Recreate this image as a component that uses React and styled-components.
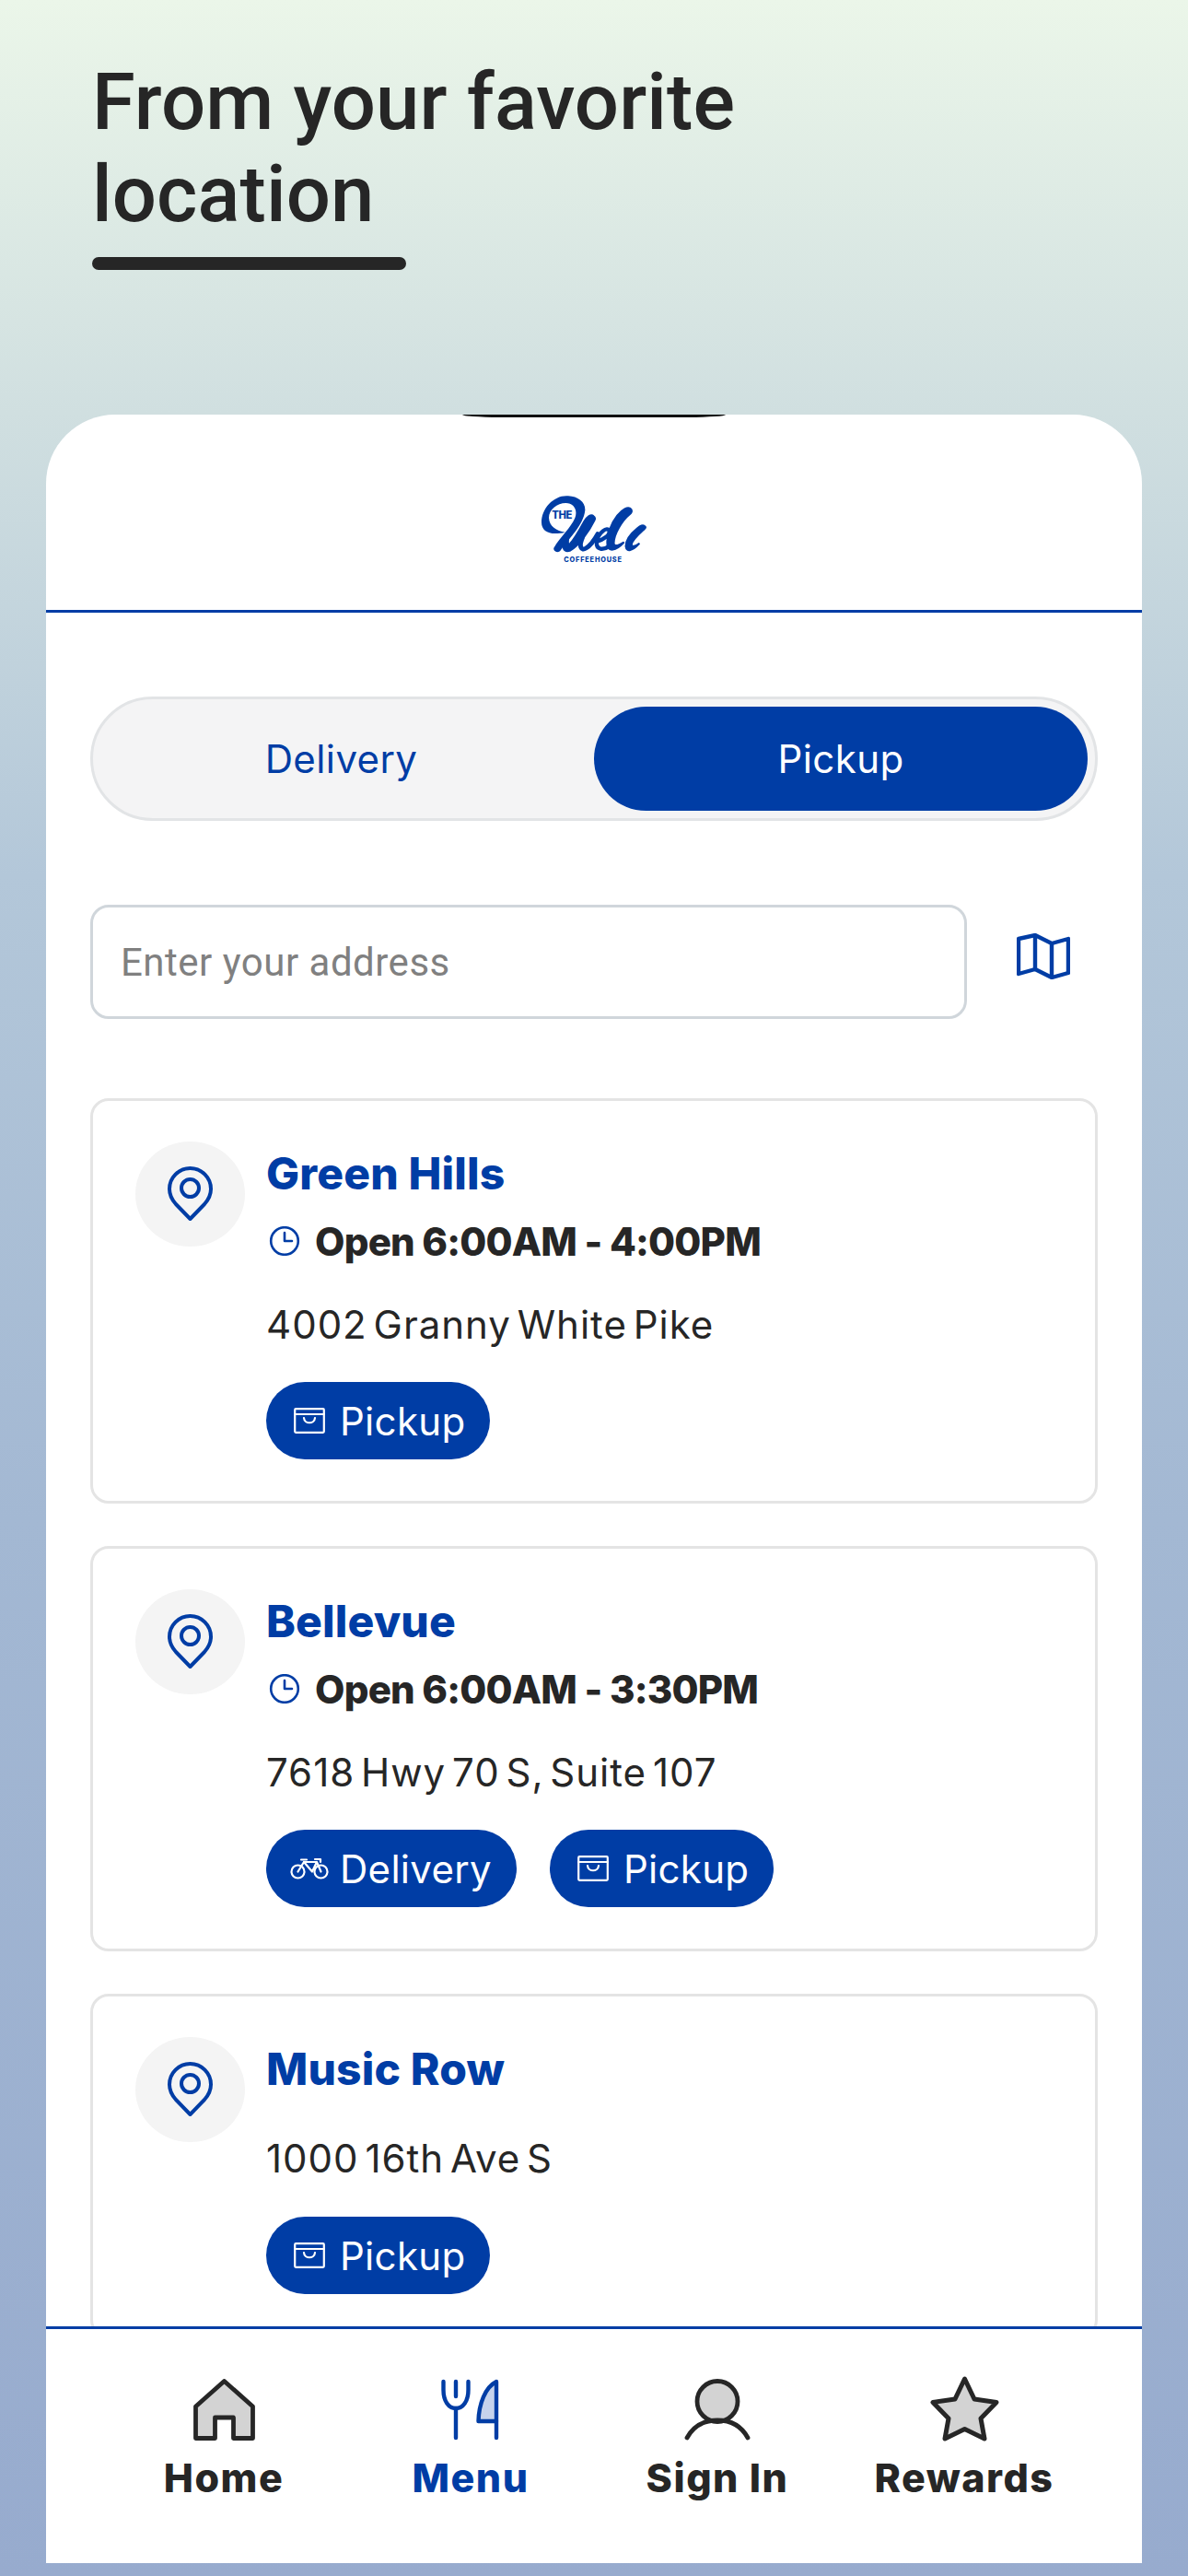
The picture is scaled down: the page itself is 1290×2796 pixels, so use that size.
import React from 'react'
import styled, { createGlobalStyle } from "styled-components"

const BLUE = '#003da5'
const INK = '#262626'

const GlobalStyle = createGlobalStyle`
  html, body {
    margin: 0;
    padding: 0;
  }
  * {
    box-sizing: border-box;
  }
`

const Logo = () => (
    <svg width="114" height="74" viewBox="263 325 342 222">
        <path fill={BLUE} d="M350 326 C305 322 263 365 263 412 C263 442 292 456 340 444 C312 440 288 425 287 397 C287 370 314 349 342 349 C368 349 382 372 372 398 C358 430 326 458 303 495 C300 508 318 514 326 502 C354 462 400 420 405 372 C406 345 382 328 350 326 Z" />
        <g fill={BLUE} stroke={BLUE} strokeWidth="7" strokeLinejoin="round">
            <path d="M432 392 C424 384 410 396 402 410 C390 432 372 465 356 482 C348 490 346 470 354 452 L338 464 C328 490 335 510 355 504 C385 490 420 435 435 405 C438 400 437 396 432 392 Z" />
            <path d="M555 370 C545 358 525 372 510 390 C490 415 475 455 478 485 C480 508 505 505 530 478 C520 485 500 495 498 480 C498 450 525 405 550 385 C556 380 558 375 555 370 Z" />
            <path d="M600 426 C594 418 585 424 575 432 C555 448 538 470 538 490 C540 510 560 504 580 482 C570 490 556 494 556 484 C558 468 585 445 597 434 C602 430 602 428 600 426 Z" />
        </g>
        <g fill="none" stroke={BLUE} strokeLinecap="round" strokeLinejoin="round">
            <path strokeWidth="15" d="M396 462 C384 490 392 506 408 496 C424 486 436 468 446 450" />
            <path strokeWidth="13" d="M444 474 C464 468 486 454 484 440 C478 424 448 444 443 476 C440 502 464 504 486 488" />
        </g>
        <text x="297" y="400" fill={BLUE} fontFamily="Inter, sans-serif" fontWeight="800" fontSize="34" textLength="66">THE</text>
        <text x="336" y="541" fill={BLUE} fontFamily="Inter, sans-serif" fontWeight="800" fontSize="22" textLength="188">COFFEEHOUSE</text>
    </svg>
)

const PinIcon = () => (
    <svg width="49" height="60" viewBox="0 0 49 60" fill="none" stroke={BLUE} strokeWidth="4" strokeLinejoin="round">
        <path d="M24.5 57 L9 41 C4.5 36 2 30 2 24.5 A22.5 22.5 0 0 1 47 24.5 C47 30 44.5 36 40 41 Z" />
        <circle cx="24.5" cy="23.5" r="9.5" />
    </svg>
)

const ClockIcon = () => (
    <svg width="34" height="32" viewBox="0 0 34 32" fill="none" stroke={BLUE} strokeWidth="2.6" strokeLinecap="round" strokeLinejoin="round">
        <circle cx="17" cy="16" r="14.8" />
        <path d="M17 7 V16 H25" />
    </svg>
)

const MapIcon = () => (
    <svg width="58" height="50" viewBox="0 0 58 50" fill="none" stroke={BLUE} strokeWidth="4.4" strokeLinejoin="round">
        <path d="M2 6 L20 2 L38 11 L56 6 V43 L38 48 L20 39 L2 44 Z" />
        <path d="M20 2 V39 M38 11 V48" />
    </svg>
)

const BagSvg = styled.svg`
    margin: 0 4px;
`

const BagIcon = () => (
    <BagSvg width="34" height="28" viewBox="0 0 34 28" fill="none" stroke="#fff" strokeWidth="2.2" strokeLinecap="round" strokeLinejoin="round">
        <rect x="1.2" y="1.2" width="31.6" height="25.6" rx="1" />
        <path d="M1.2 7 H32.8" />
        <path d="M11 11 C11.5 18 22.5 18 23 11" />
    </BagSvg>
)

const BikeIcon = () => (
    <svg width="42" height="24" viewBox="0 0 42 24" fill="none" stroke="#fff" strokeWidth="2.2" strokeLinecap="round" strokeLinejoin="round">
        <circle cx="8.5" cy="15.5" r="7" />
        <circle cx="33.5" cy="15.5" r="7" />
        <path d="M8.5 15.5 L15 5 L24 15.5 L29 5 L33.5 15.5" />
        <path d="M12 2.5 H18 M15 5 H28 M27 2 H33 V5" />
    </svg>
)

const HomeIcon = () => (
    <svg width="67" height="67" viewBox="0 0 67 67" fill="#d3d3d3" stroke={INK} strokeWidth="4.8" strokeLinejoin="round">
        <path d="M33.5 2.5 L2.5 30 V64.5 H23.5 V42 H43.5 V64.5 H64.5 V30 Z" />
    </svg>
)

const MenuIcon = () => (
    <svg width="66" height="67" viewBox="0 0 66 67" fill="none" stroke={BLUE} strokeWidth="4.4" strokeLinecap="round" strokeLinejoin="round">
        <path d="M3.5 3 V12 C3.5 24 9 32 17 32 C25 32 30.5 24 30.5 12 V3" />
        <path d="M17 3 V19 M17 32 V64" />
        <path fill="#c6d3ec" d="M61 3 C49 9 42 27 41.5 46 H61 Z" />
        <path d="M61 46 V64" />
    </svg>
)

const PersonIcon = () => (
    <svg width="72" height="67" viewBox="0 0 72 67" fill="none" stroke={INK} strokeWidth="4.8" strokeLinecap="round">
        <circle cx="36" cy="24.5" r="22" fill="#d3d3d3" />
        <path d="M3 64 C10 51 22 45 36 45 C50 45 62 51 69 64" />
    </svg>
)

const StarIcon = () => (
    <svg width="77" height="72" viewBox="0 0 77 72" fill="#d3d3d3" stroke={INK} strokeWidth="5" strokeLinejoin="round">
        <path d="M38.5 3 L49 25 L73 28.5 L56 46 L60 68 L38.5 57.5 L17 68 L21 46 L4 28.5 L28 25 Z" />
    </svg>
)

const locations = [
    { name: 'Green Hills', hours: 'Open 6:00AM - 4:00PM', address: '4002 Granny White Pike', services: ['Pickup'] },
    { name: 'Bellevue', hours: 'Open 6:00AM - 3:30PM', address: '7618 Hwy 70 S, Suite 107', services: ['Delivery', 'Pickup'] },
    { name: 'Music Row', address: '1000 16th Ave S', services: ['Pickup'] },
]

const navItems = [
    { label: 'Home', icon: <HomeIcon /> },
    { label: 'Menu', icon: <MenuIcon />, active: true },
    { label: 'Sign In', icon: <PersonIcon /> },
    { label: 'Rewards', icon: <StarIcon /> },
]

function App() {
    return (
        <Page>
            <GlobalStyle />
            <Hero>
                <Title>From your favorite<br />location</Title>
                <TitleBar />
            </Hero>

            <Panel>
                <Notch />
                <Header>
                    <Logo />
                </Header>

                <Content>
                    <Toggle>
                        <ToggleOption>Delivery</ToggleOption>
                        <ToggleOption $active>Pickup</ToggleOption>
                    </Toggle>

                    <SearchRow>
                        <AddressInput type="text" placeholder="Enter your address" />
                        <MapButton><MapIcon /></MapButton>
                    </SearchRow>

                    <CardList>
                        {locations.map(loc => (
                            <Card key={loc.name}>
                                <PinCircle><PinIcon /></PinCircle>
                                <CardBody>
                                    <Name>{loc.name}</Name>
                                    {loc.hours && (
                                        <Hours>
                                            <ClockIcon />
                                            {loc.hours}
                                        </Hours>
                                    )}
                                    <Address>{loc.address}</Address>
                                    <Services>
                                        {loc.services.map(s => (
                                            <ServicePill key={s}>
                                                {s === 'Delivery' ? <BikeIcon /> : <BagIcon />}
                                                {s}
                                            </ServicePill>
                                        ))}
                                    </Services>
                                </CardBody>
                            </Card>
                        ))}
                    </CardList>
                </Content>

                <Nav>
                    {navItems.map(item => (
                        <NavItem key={item.label} $active={item.active}>
                            <NavIcon>{item.icon}</NavIcon>
                            {item.label}
                        </NavItem>
                    ))}
                </Nav>
            </Panel>
        </Page>
    )
}

const Page = styled.div`
    width: 1290px;
    height: 2796px;
    overflow: hidden;
    display: flex;
    flex-direction: column;
    padding-bottom: 14px;
    background: linear-gradient(180deg, #ebf6e9 0%, #d0dfe0 16%, #b3c7d9 34%, #a3b8d3 59%, #97abce 100%);
    font-family: Inter, "Liberation Sans", sans-serif;
    color: ${INK};
`
const Hero = styled.div`
    height: 450px;
    flex-shrink: 0;
    padding: 61px 0 0 100px;
`
const Title = styled.h1`
    margin: 0;
    font-family: Roboto, sans-serif;
    font-weight: 500;
    font-size: 85px;
    line-height: 100px;
    letter-spacing: 0.1px;
    color: ${INK};
`
const TitleBar = styled.div`
    width: 341px;
    height: 14px;
    margin-top: 18px;
    border-radius: 7px;
    background-color: ${INK};
`
const Panel = styled.div`
    position: relative;
    flex: 1;
    min-height: 0;
    margin: 0 50px;
    display: flex;
    flex-direction: column;
    overflow: hidden;
    border-radius: 75px 75px 0 0;
    background-color: #fff;
`
const Notch = styled.div`
    position: absolute;
    top: 0;
    left: 452px;
    width: 286px;
    height: 3px;
    border-radius: 0 0 40px 40px / 0 0 3px 3px;
    background-color: #111;
`
const Header = styled.header`
    height: 215px;
    flex-shrink: 0;
    padding-top: 37px;
    display: flex;
    align-items: center;
    justify-content: center;
    border-bottom: 3px solid ${BLUE};
`
const Content = styled.div`
    flex: 1;
    min-height: 0;
    overflow: hidden;
    padding: 91px 48px 0;
`
const Toggle = styled.div`
    height: 135px;
    padding: 8px;
    display: grid;
    grid-template-columns: 1fr 536px;
    column-gap: 13px;
    border: 3px solid #e2e4e6;
    border-radius: 68px;
    background-color: #f4f4f5;
`
const ToggleOption = styled.div`
    display: flex;
    align-items: center;
    justify-content: center;
    border-radius: 57px;
    font-size: 42px;
    letter-spacing: 0.4px;
    color: ${p => p.$active ? '#fff' : BLUE};
    background-color: ${p => p.$active ? BLUE : 'transparent'};
`
const SearchRow = styled.div`
    display: flex;
    margin-top: 91px;
`
const AddressInput = styled.input`
    width: 953px;
    height: 124px;
    padding: 0 30px;
    border: 3px solid #d0d6db;
    border-radius: 20px;
    outline: none;
    background-color: #fff;
    font-family: Roboto, sans-serif;
    font-size: 42px;
    letter-spacing: 0.5px;

    &::placeholder {
        color: #808080;
        opacity: 1;
    }
`
const MapButton = styled.div`
    flex: 1;
    padding: 0 30px 12px 54px;
    display: flex;
    align-items: center;
    justify-content: center;
`
const CardList = styled.div`
    display: flex;
    flex-direction: column;
    gap: 46px;
    margin-top: 86px;
`
const Card = styled.div`
    display: flex;
    align-items: flex-start;
    gap: 23px;
    flex-shrink: 0;
    padding: 44px 46px 45px;
    border: 3px solid #e4e4e4;
    border-radius: 20px;
    background-color: #fff;
`
const PinCircle = styled.div`
    width: 119px;
    height: 114px;
    flex-shrink: 0;
    display: flex;
    align-items: center;
    justify-content: center;
    border-radius: 50%;
    background-color: #f4f4f4;
`
const CardBody = styled.div`
    display: flex;
    flex-direction: column;
    align-items: flex-start;
`
const Name = styled.div`
    height: 70px;
    line-height: 70px;
    font-size: 48px;
    font-weight: 800;
    letter-spacing: 0.15px;
    color: ${BLUE};
`
const Hours = styled.div`
    height: 70px;
    margin-top: 3px;
    padding-left: 3px;
    display: flex;
    align-items: center;
    gap: 16px;
    font-size: 42px;
    font-weight: 800;
    letter-spacing: -0.8px;
`
const Address = styled.div`
    height: 60px;
    line-height: 60px;
    margin-top: 26px;
    font-size: 42px;
    letter-spacing: 1px;
    word-spacing: -6px;

    ${Name} + & {
        margin-top: 32px;
        margin-bottom: 1px;
    }
`
const Services = styled.div`
    display: flex;
    gap: 36px;
    margin-top: 32px;
`
const ServicePill = styled.div`
    height: 84px;
    padding: 0 27px 0 26px;
    display: flex;
    align-items: center;
    gap: 12px;
    border-radius: 42px;
    background-color: ${BLUE};
    color: #fff;
    font-size: 42px;
    letter-spacing: 0.3px;
`
const Nav = styled.nav`
    height: 257px;
    flex-shrink: 0;
    padding: 51px 59px 0;
    display: grid;
    grid-template-columns: repeat(4, 1fr);
    align-content: start;
    border-top: 3px solid ${BLUE};
    background-color: #fff;
`
const NavItem = styled.div`
    display: flex;
    flex-direction: column;
    align-items: center;
    gap: 13px;
    font-size: 43px;
    font-weight: 800;
    line-height: 50px;
    letter-spacing: 1.5px;
    color: ${p => p.$active ? BLUE : INK};
`
const NavIcon = styled.div`
    height: 72px;
    display: flex;
    align-items: center;
    justify-content: center;
`

export default App
